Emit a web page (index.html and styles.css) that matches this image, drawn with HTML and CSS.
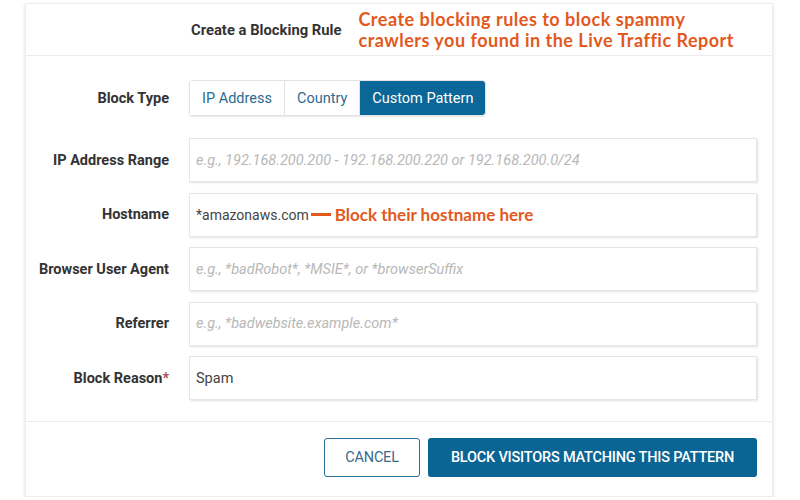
FILE: index.html
```html
<!DOCTYPE html>
<html lang="en">
<head>
    <meta charset="UTF-8">
    <title>Create a Blocking Rule</title>
    <link rel="stylesheet" href="styles.css">
</head>
<body>

    <!-- Blocking rule card -->
    <div class="card">
        <div class="card-header">
            <h2>Create a Blocking Rule</h2>
            <div class="note note-header">Create blocking rules to block spammy<br>crawlers you found in the Live Traffic Report</div>
        </div>

        <div class="card-body">
            <div class="row">
                <label>Block Type</label>
                <div class="segmented">
                    <button>IP Address</button>
                    <button>Country</button>
                    <button class="active">Custom Pattern</button>
                </div>
            </div>

            <div class="row field-row">
                <label>IP Address Range</label>
                <input type="text" placeholder="e.g., 192.168.200.200 - 192.168.200.220 or 192.168.200.0/24">
            </div>

            <div class="row field-row">
                <label>Hostname</label>
                <div class="field">
                    <span class="value">*amazonaws.com</span>
                    <span class="dash"></span>
                    <span class="note">Block their hostname here</span>
                </div>
            </div>

            <div class="row field-row">
                <label>Browser User Agent</label>
                <input type="text" placeholder="e.g., *badRobot*, *MSIE*, or *browserSuffix">
            </div>

            <div class="row field-row">
                <label>Referrer</label>
                <input type="text" placeholder="e.g., *badwebsite.example.com*">
            </div>

            <div class="row field-row">
                <label>Block Reason<span class="req">*</span></label>
                <input type="text" value="Spam">
            </div>
        </div>

        <div class="card-footer">
            <button class="btn btn-outline">CANCEL</button>
            <button class="btn btn-primary">BLOCK VISITORS MATCHING THIS PATTERN</button>
        </div>
    </div>

</body>
</html>
```

FILE: styles.css
```css
/* Page reset */
body, html {
    margin: 0;
    padding: 0;
    background-color: #fff;
    font-family: Roboto, Arial, sans-serif;
    color: #333;
}

/* Card */
.card {
    width: 746px;
    margin: 3px 0 0 25px;
    border: 1px solid #ececec;
    box-shadow: 0 2px 4px rgba(0, 0, 0, 0.12);
    background: #fff;
}

.card-header {
    height: 51px;
    border-bottom: 1px solid #ececec;
    display: flex;
    align-items: center;
}

.card-header h2 {
    margin: 0 0 0 165px;
    font-size: 14.8px;
    font-weight: 700;
    color: #333;
}

/* Orange annotations */
.note {
    font-family: Lato, "Open Sans", sans-serif;
    font-weight: 700;
    color: #e2591d;
}

.note-header {
    margin-left: 17px;
    font-size: 18px;
    line-height: 21px;
    letter-spacing: 0.5px;
}

/* Form rows */
.card-body {
    padding: 24px 15px 21px 0;
}

.row {
    display: grid;
    grid-template-columns: 143px 1fr;
    column-gap: 20px;
    align-items: center;
}

.row label {
    text-align: right;
    font-size: 14.5px;
    font-weight: 700;
    color: #333;
}

.row .req {
    color: #b04a4a;
}

.field-row {
    margin-top: 10.5px;
}

.row:nth-child(2) {
    margin-top: 22px;
}

/* Segmented control */
.segmented {
    display: flex;
    width: max-content;
    border: 1px solid #e3e3e3;
    border-radius: 3px;
    box-shadow: 0 1px 2px rgba(0, 0, 0, 0.1);
}

.segmented button {
    height: 34px;
    padding: 0 12px;
    border: none;
    border-right: 1px solid #e3e3e3;
    background: #fff;
    color: #2d6a90;
    font-family: Roboto, Arial, sans-serif;
    font-size: 14.5px;
}

.segmented button:last-child {
    border-right: none;
}

.segmented .active {
    background: #0a6797;
    color: #fff;
    border-radius: 0 3px 3px 0;
}

/* Inputs */
.row input, .field {
    box-sizing: border-box;
    height: 44px;
    width: 100%;
    padding: 0 6px;
    border: 1px solid #e6e6e6;
    box-shadow: 1px 1px 2px rgba(0, 0, 0, 0.12);
    font-family: Roboto, Arial, sans-serif;
    font-size: 14.5px;
    color: #444;
    outline: none;
}

.row input::placeholder {
    font-style: italic;
    color: #b8b8b8;
}

.field {
    display: flex;
    align-items: center;
}

.field .value {
    font-size: 14px;
}

.field .dash {
    width: 20px;
    height: 3px;
    margin: 0 4px 0 2px;
    background: #e2591d;
}

.field .note {
    font-size: 17px;
}

/* Footer */
.card-footer {
    border-top: 1px solid #ececec;
    padding: 16px 15px 19px 0;
    display: flex;
    justify-content: flex-end;
    gap: 8px;
}

.btn {
    height: 39px;
    border-radius: 3px;
    font-family: Roboto, Arial, sans-serif;
    font-size: 14.5px;
    letter-spacing: -0.2px;
}

.btn-outline {
    width: 96px;
    background: #fff;
    border: 1px solid #2b7098;
    color: #3c6a88;
}

.btn-primary {
    width: 329px;
    background: #0b6594;
    border: none;
    color: #fff;
    font-weight: 500;
}
```
